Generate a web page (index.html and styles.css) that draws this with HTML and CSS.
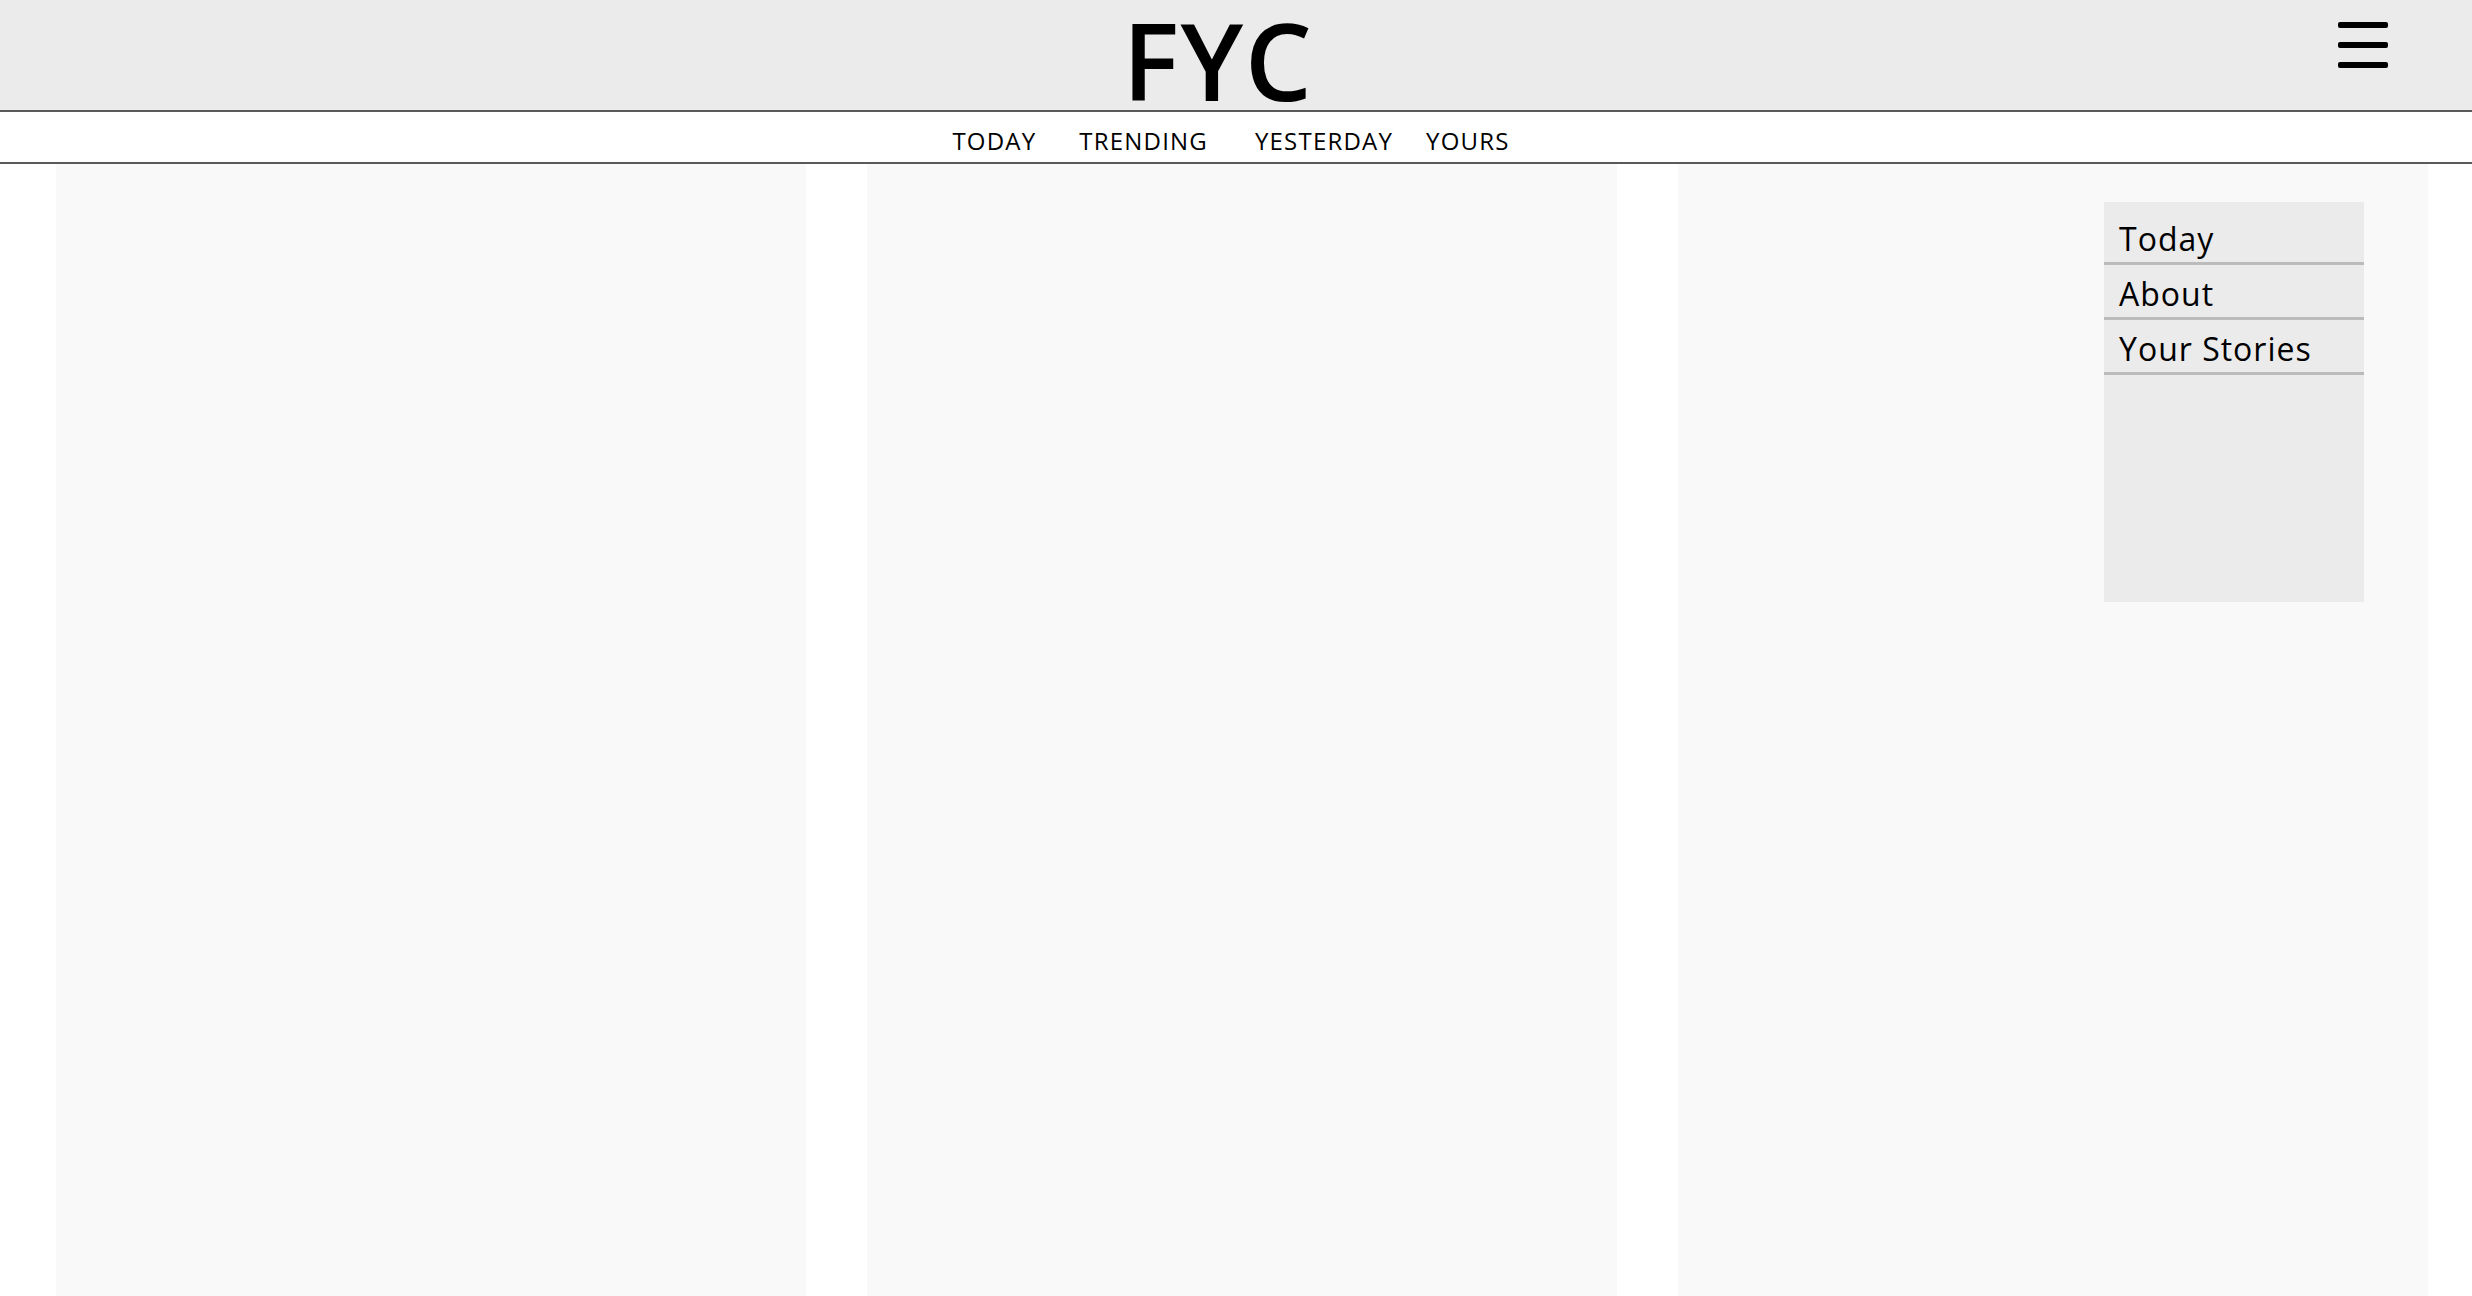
FILE: index.html
```html
<!DOCTYPE html>
<html lang="en">
<head>
<meta charset="utf-8">
<title>FYC</title>
<link rel="stylesheet" href="styles.css">
</head>
<body>
<header class="masthead">
  <h1 class="logo">FYC</h1>
  <button class="burger" aria-label="Menu">
    <span class="bar"></span>
    <span class="bar"></span>
    <span class="bar"></span>
  </button>
</header>
<nav class="tabs">
  <a class="tab tab-today" href="#">TODAY</a>
  <a class="tab tab-trending" href="#">TRENDING</a>
  <a class="tab tab-yesterday" href="#">YESTERDAY</a>
  <a class="tab tab-yours" href="#">YOURS</a>
</nav>
<main class="columns">
  <section class="col"></section>
  <section class="col"></section>
  <section class="col"></section>
</main>
<aside class="side-menu">
  <a class="menu-item" href="#">Today</a>
  <a class="menu-item" href="#">About</a>
  <a class="menu-item" href="#">Your Stories</a>
</aside>
</body>
</html>
```

FILE: styles.css
```css
html, body {
  margin: 0;
  padding: 0;
  background: #ffffff;
  font-family: "Open Sans", "Noto Sans", sans-serif;
  color: #000;
  overflow: hidden;
  height: 100%;
}

.masthead {
  height: 110px;
  background: #ebebeb;
  border-bottom: 2px solid #5a5a5a;
  display: flex;
  justify-content: center;
  align-items: flex-end;
  padding-right: 36px;
}

.logo {
  margin: 0 0 10px 0;
  font-size: 106px;
  font-weight: 600;
  line-height: 80px;
  letter-spacing: 1.5px;
}

.burger {
  position: absolute;
  top: 22px;
  left: 2338px;
  width: 50px;
  height: 46px;
  padding: 0;
  border: 0;
  background: transparent;
  display: flex;
  flex-direction: column;
  justify-content: space-between;
  cursor: pointer;
}

.bar {
  display: block;
  width: 50px;
  height: 6px;
  border-radius: 2px;
  background: #000;
}

.tabs {
  height: 50px;
  background: #fff;
  border-bottom: 2px solid #5a5a5a;
  display: flex;
  justify-content: center;
  align-items: flex-start;
  padding-right: 10px;
}

.tab {
  color: #000;
  text-decoration: none;
  font-size: 24px;
  letter-spacing: 1.2px;
  line-height: 1;
  margin-top: 17px;
}

.tab-today { margin-right: 43px; }
.tab-trending { margin-right: 47px; }
.tab-yesterday { margin-right: 33px; }

.columns {
  display: grid;
  grid-template-columns: repeat(3, 750px);
  column-gap: 61px;
  padding-left: 56px;
  padding-right: 44px;
}

.col {
  background: #f9f9f9;
  height: 1200px;
}

.side-menu {
  position: absolute;
  top: 202px;
  left: 2104px;
  width: 260px;
  height: 392px;
  padding-top: 8px;
  background: #ebebeb;
  display: flex;
  flex-direction: column;
}

.menu-item {
  display: block;
  height: 46px;
  line-height: 46px;
  padding-top: 6px;
  padding-left: 15px;
  font-size: 32px;
  letter-spacing: 1px;
  color: #000;
  text-decoration: none;
  border-bottom: 3px solid #bbbbbb;
}
```
